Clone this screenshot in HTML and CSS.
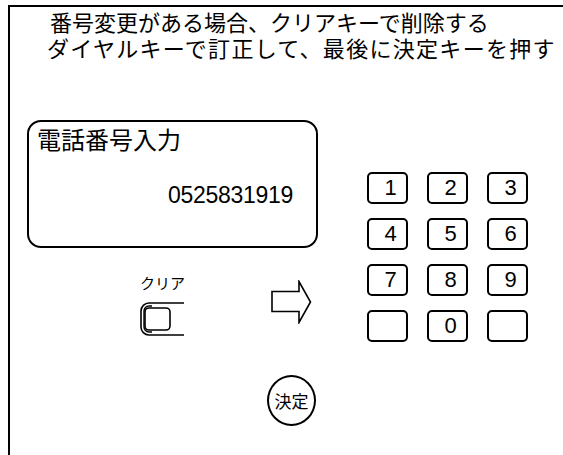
FILE: index.html
```html
<!DOCTYPE html>
<html lang="ja">
<head>
    <meta charset="UTF-8">
    <title>電話番号入力</title>
    <link rel="stylesheet" href="styles.css">
</head>
<body>
    <div class="frame">
        <div class="notice">
            <p class="line line-one">番号変更がある場合、クリアキーで削除する</p>
            <p class="line line-two">ダイヤルキーで訂正して、最後に決定キーを押す</p>
        </div>

        <div class="panel">
            <div class="left">
                <div class="display">
                    <div class="display-title">電話番号入力</div>
                    <div class="display-number">0525831919</div>
                </div>

                <div class="controls">
                    <div class="clear">
                        <div class="clear-label">クリア</div>
                        <svg class="clear-key" width="44" height="34" viewBox="0 0 44 34">
                            <path d="M44 1 H9 A8 8 0 0 0 1 9 V25 A8 8 0 0 0 9 33 H44" fill="none" stroke="#000" stroke-width="1.6"/>
                            <path d="M12 4 H9 A5 5 0 0 0 4 9 V25 A5 5 0 0 0 9 30 H12" fill="none" stroke="#000" stroke-width="1.4"/>
                            <rect x="5" y="6" width="25" height="22" rx="4" fill="none" stroke="#000" stroke-width="1.6"/>
                        </svg>
                    </div>
                    <svg class="arrow" width="41" height="44" viewBox="0 0 41 44">
                        <polygon points="1,11.5 28,11.5 28,1.5 39.5,22 28,42.5 28,31.5 1,31.5" fill="#fff" stroke="#000" stroke-width="1.6"/>
                    </svg>
                </div>

                <div class="decide">決定</div>
            </div>

            <div class="keypad">
                <div class="key">1</div>
                <div class="key">2</div>
                <div class="key">3</div>
                <div class="key">4</div>
                <div class="key">5</div>
                <div class="key">6</div>
                <div class="key">7</div>
                <div class="key">8</div>
                <div class="key">9</div>
                <div class="key"></div>
                <div class="key">0</div>
                <div class="key"></div>
            </div>
        </div>
    </div>
</body>
</html>
```

FILE: styles.css
```css
body {
    margin: 0;
    background-color: #fff;
    color: #000;
    font-family: "Noto Sans CJK JP", "Liberation Sans", sans-serif;
    overflow: hidden;
}

.frame {
    margin: 5px 0 0 8px;
    border-top: 2px solid #000;
    border-left: 2px solid #000;
    height: 460px;
}

.notice {
    padding-top: 1px;
}

.line {
    margin: 0;
    font-size: 22px;
    line-height: 26px;
    white-space: nowrap;
}

.line-one {
    padding-left: 40px;
}

.line-two {
    padding-left: 37px;
    letter-spacing: 1.3px;
}

.panel {
    display: flex;
    align-items: flex-start;
    padding-left: 17px;
    margin-top: 60px;
}

.left {
    width: 291px;
}

.display {
    box-sizing: border-box;
    height: 128px;
    border: 2px solid #000;
    border-radius: 14px;
    padding: 3px 23px 0 8px;
}

.display-title {
    font-size: 24px;
    line-height: 28px;
}

.display-number {
    margin-top: 31px;
    text-align: right;
    font-family: "Liberation Sans", Arial, sans-serif;
    font-size: 23px;
    line-height: 22px;
    letter-spacing: -0.3px;
}

.controls {
    display: flex;
    align-items: flex-start;
    margin-top: 25px;
}

.clear {
    width: 44px;
    margin-left: 113px;
}

.clear-label {
    font-size: 15px;
    line-height: 20px;
    white-space: nowrap;
}

.clear-key {
    display: block;
    margin-top: 9px;
}

.arrow {
    display: block;
    margin: 7px 0 0 87px;
}

.decide {
    box-sizing: border-box;
    width: 49px;
    height: 51px;
    margin: 39px 0 0 240px;
    border: 2px solid #000;
    border-radius: 50%;
    display: flex;
    align-items: center;
    justify-content: center;
    font-size: 17px;
}

.keypad {
    display: grid;
    grid-template-columns: repeat(3, 41px);
    grid-auto-rows: 32px;
    column-gap: 19px;
    row-gap: 14px;
    margin: 52px 0 0 49px;
}

.key {
    box-sizing: border-box;
    border: 2px solid #000;
    border-radius: 5px;
    padding-left: 6px;
    display: flex;
    align-items: center;
    justify-content: center;
    font-family: "Liberation Sans", Arial, sans-serif;
    font-size: 22px;
}
```
